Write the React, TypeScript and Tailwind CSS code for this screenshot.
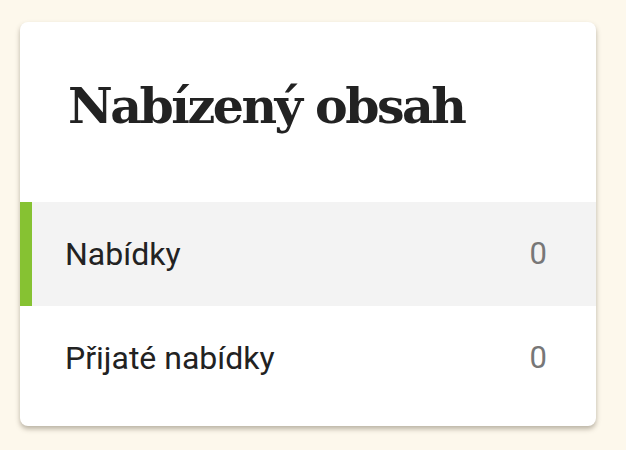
export default function App() {
  const rows = [
    { label: 'Nabídky', count: 0, active: true },
    { label: 'Přijaté nabídky', count: 0, active: false },
  ];

  return (
    <div className="min-h-[450px] bg-[#fdf8ec] px-5 pt-[22px]">
      <div className="w-[576px] overflow-hidden rounded-lg bg-white pb-4 shadow-[0_3px_5px_rgba(60,50,30,0.35)]">
        <div className="flex h-[180px] items-center px-12 pb-3">
          <h1 className="font-['DejaVu_Serif',serif] text-[49px] font-bold leading-none tracking-[-2.5px] text-[#222]">
            Nabízený obsah
          </h1>
        </div>
        {rows.map((row) => (
          <div
            key={row.label}
            className={
              row.active
                ? 'flex h-[104px] items-center justify-between border-l-[12px] border-[#86c232] bg-[#f3f3f3] pl-[33px] pr-[49px]'
                : 'flex h-[104px] items-center justify-between pl-[45px] pr-[49px]'
            }
          >
            <span className="font-['Roboto',sans-serif] text-[32px] text-[#222]">{row.label}</span>
            <span className="font-['Roboto',sans-serif] text-[31px] text-[#777]">{row.count}</span>
          </div>
        ))}
      </div>
    </div>
  );
}
